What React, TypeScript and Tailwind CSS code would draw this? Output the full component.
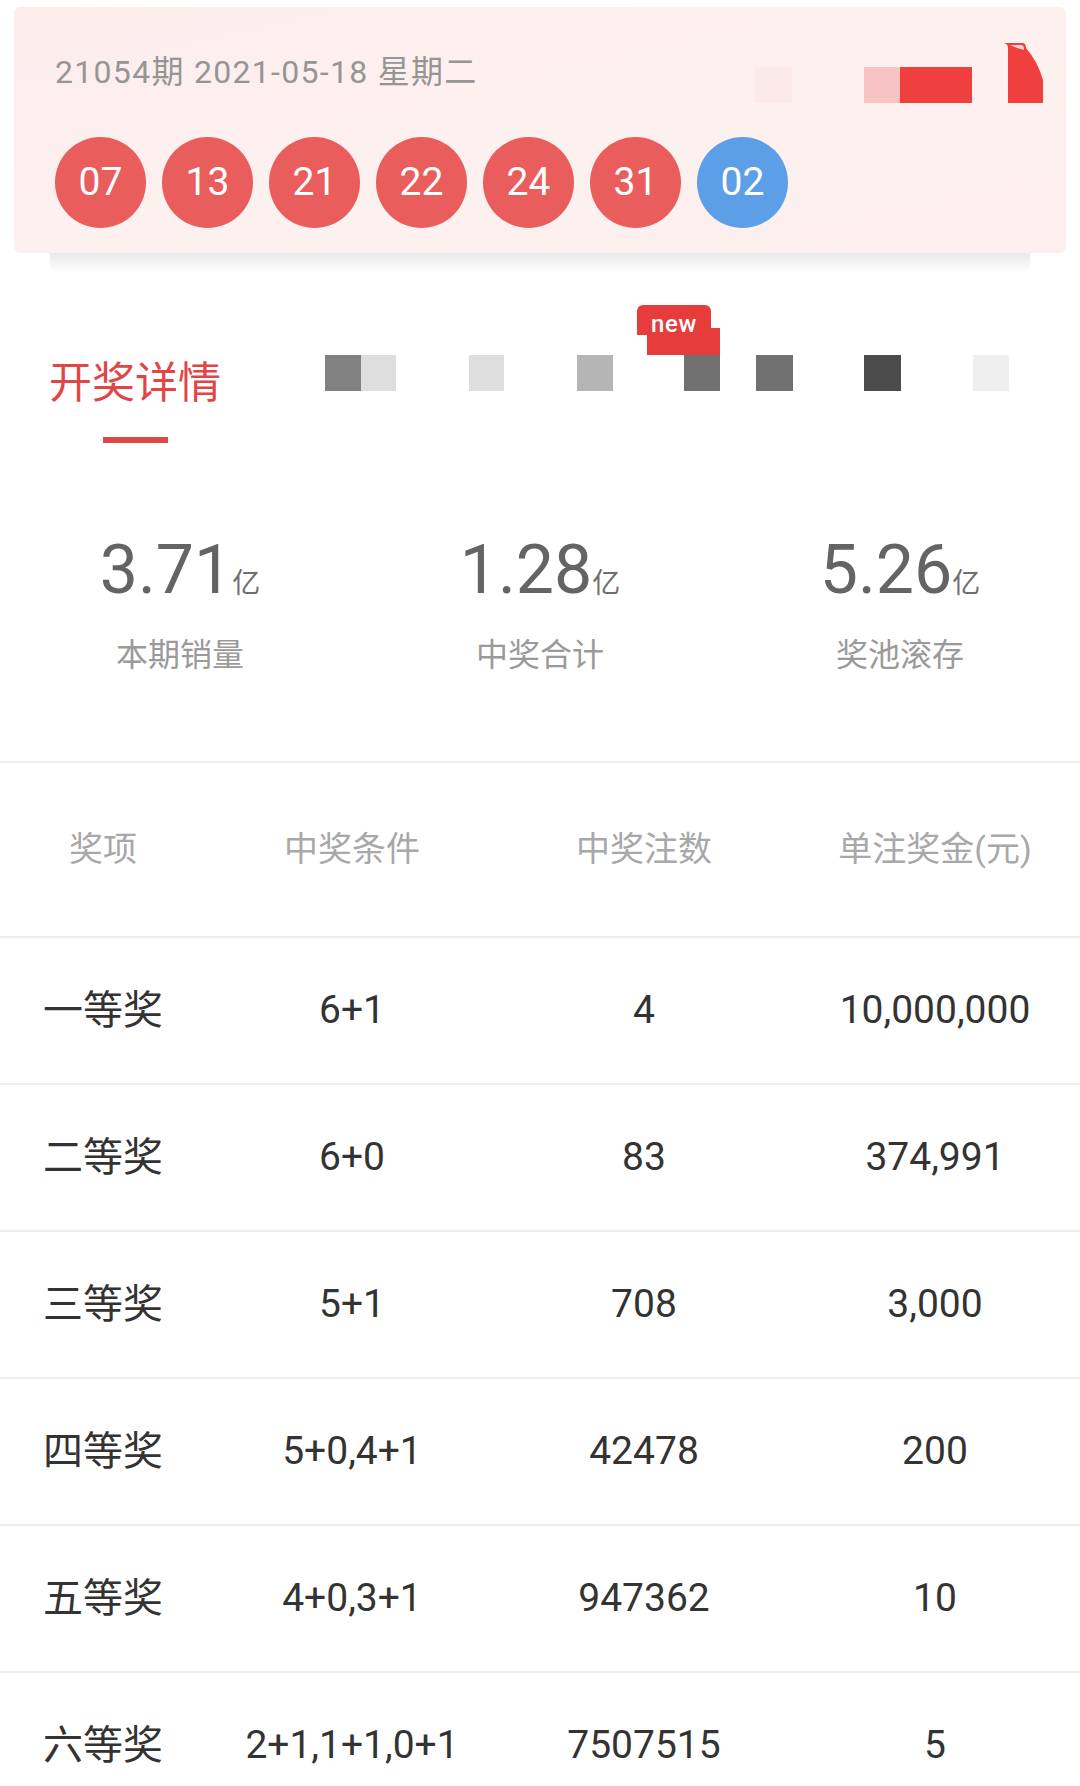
const balls = [
  { n: '07', blue: false },
  { n: '13', blue: false },
  { n: '21', blue: false },
  { n: '22', blue: false },
  { n: '24', blue: false },
  { n: '31', blue: false },
  { n: '02', blue: true },
];

const stats = [
  { value: '3.71', label: '本期销量' },
  { value: '1.28', label: '中奖合计' },
  { value: '5.26', label: '奖池滚存' },
];

const prizes = [
  ['一等奖', '6+1', '4', '10,000,000'],
  ['二等奖', '6+0', '83', '374,991'],
  ['三等奖', '5+1', '708', '3,000'],
  ['四等奖', '5+0,4+1', '42478', '200'],
  ['五等奖', '4+0,3+1', '947362', '10'],
  ['六等奖', '2+1,1+1,0+1', '7507515', '5'],
];

const App = () => {
  return (
    <div className="w-[1080px] h-[1786px] overflow-hidden bg-white font-['Roboto','Noto_Sans_CJK_SC',sans-serif]">
      {/* 开奖号码卡片 */}
      <div className="px-[14px] pt-[7px]">
        <div className="relative h-[246px] rounded-[6px] bg-gradient-to-br from-[#fcedeb] via-[#fdf1ef] to-[#fcefed] pl-[41px] pt-[49px]">
          <div className="text-[32px] leading-none tracking-[1.3px] text-[#959595]">21054期 2021-05-18 星期二</div>
          <div className="mt-[49px] flex gap-[16px]">
            {balls.map((b, i) => (
              <div
                key={i}
                className={`flex h-[91px] w-[91px] items-center justify-center rounded-full text-[39px] text-white ${
                  b.blue ? 'bg-[#5c9fe6]' : 'bg-[#ea5d5d]'
                }`}
              >
                {b.n}
              </div>
            ))}
          </div>

          {/* 右上角装饰 */}
          <div className="absolute left-[741px] top-[60px] h-[36px] w-[37px] bg-[#fbeae8]" />
          <div className="absolute left-[850px] top-[60px] h-[36px] w-[36px] bg-[#f8c3c3]" />
          <div className="absolute left-[886px] top-[60px] h-[36px] w-[72px] bg-[#ef3f3f]" />
          <svg className="absolute left-[990px] top-[35px]" width="40" height="61" viewBox="0 0 40 61">
            <path d="M0 1 H18 Q22 1 22 6 Q34 20 39 38 V61 H4 V6 Q4 2 0 1 Z" fill="#ef3f3f" />
            <path d="M6 3 H18 Q20 4 20 8 L13 6 Z" fill="#f7d4d1" />
          </svg>
        </div>
        <div className="mx-[36px] h-[20px] rounded-b-[10px] bg-gradient-to-b from-[#e9e9e9] to-white" />
      </div>

      {/* 标签栏 */}
      <div className="relative -mt-[20px] flex h-[190px] items-start">
        <div className="ml-[49px] flex flex-col items-center pt-[106px]">
          <div className="text-[43px] leading-[48px] text-[#e04646]">开奖详情</div>
          <div className="mt-[30px] h-[6px] w-[65px] bg-[#e04848]" />
        </div>
        <div className="mt-[102px] flex">
          <div className="ml-[104px] h-[36px] w-[36px] bg-[#818181]" />
          <div className="h-[36px] w-[35px] bg-[#dedede]" />
          <div className="ml-[73px] h-[36px] w-[35px] bg-[#dedede]" />
          <div className="ml-[73px] h-[36px] w-[36px] bg-[#b5b5b5]" />
          <div className="ml-[71px] h-[36px] w-[36px] bg-[#717171]" />
          <div className="ml-[36px] h-[36px] w-[37px] bg-[#717171]" />
          <div className="ml-[71px] h-[36px] w-[37px] bg-[#4b4b4b]" />
          <div className="ml-[72px] h-[36px] w-[36px] bg-[#efefef]" />
        </div>

        {/* new 角标 */}
        <div className="absolute left-[637px] top-[52px] h-[30px] w-[74px] rounded-t-[6px] bg-[#e63c3c]" />
        <div className="absolute left-[647px] top-[75px] h-[27px] w-[73px] bg-[#e63c3c]" />
        <div className="absolute left-[637px] top-[59px] z-10 w-[74px] text-center text-[24px] font-medium leading-none tracking-wide text-white">
          new
        </div>
      </div>

      {/* 统计 */}
      <div className="mt-[93px] grid grid-cols-3 pb-[88px]">
        {stats.map((s) => (
          <div key={s.label} className="flex flex-col items-center">
            <div className="flex items-baseline">
              <span className="text-[68px] leading-none text-[#646464]">{s.value}</span>
              <span className="text-[28px] leading-none text-[#707070]">亿</span>
            </div>
            <div className="mt-[33px] text-[32px] leading-[36px] text-[#9a9a9a]">{s.label}</div>
          </div>
        ))}
      </div>

      {/* 奖级表格 */}
      <div className="border-t-2 border-[#eeeeee]">
        <div className="grid h-[175px] grid-cols-[206px_292px_292px_290px] items-center border-b-2 border-[#eeeeee] text-[34px] text-[#a8a8a8]">
          <div className="text-center">奖项</div>
          <div className="text-center">中奖条件</div>
          <div className="text-center">中奖注数</div>
          <div className="text-center">单注奖金(元)</div>
        </div>
        {prizes.map((row) => (
          <div
            key={row[0]}
            className="grid h-[147px] grid-cols-[206px_292px_292px_290px] items-center border-b-2 border-[#eeeeee] text-[39px] text-[#333333]"
          >
            <div className="text-center text-[40px]">{row[0]}</div>
            <div className="text-center">{row[1]}</div>
            <div className="text-center">{row[2]}</div>
            <div className="text-center">{row[3]}</div>
          </div>
        ))}
      </div>
    </div>
  );
};

export default App;
